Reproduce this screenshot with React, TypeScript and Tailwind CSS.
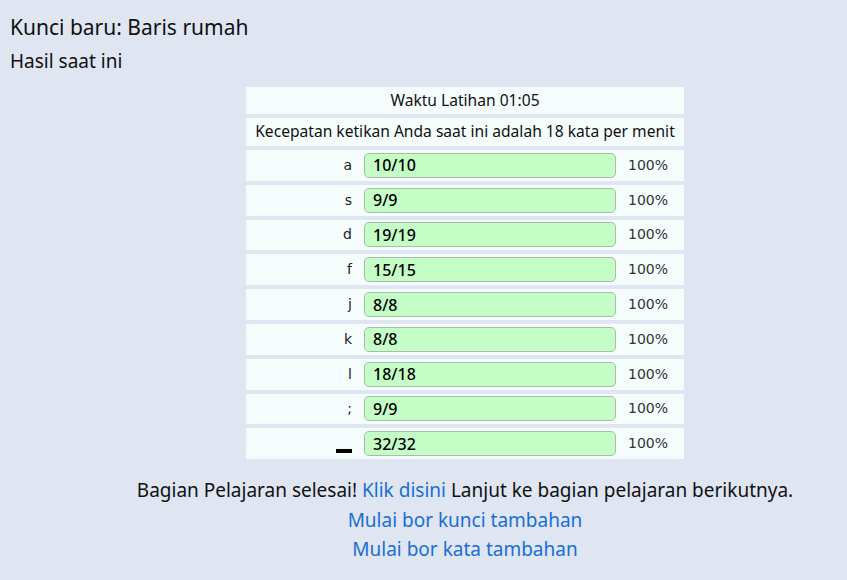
import React from 'react';

const font = { fontFamily: '"Noto Sans", "Open Sans", sans-serif' };

type KeyResult = { key: string; hits: number; total: number };

const results: KeyResult[] = [
  { key: 'a', hits: 10, total: 10 },
  { key: 's', hits: 9, total: 9 },
  { key: 'd', hits: 19, total: 19 },
  { key: 'f', hits: 15, total: 15 },
  { key: 'j', hits: 8, total: 8 },
  { key: 'k', hits: 8, total: 8 },
  { key: 'l', hits: 18, total: 18 },
  { key: ';', hits: 9, total: 9 },
  { key: 'space', hits: 32, total: 32 },
];

function KeyRow({ item }: { item: KeyResult }) {
  const pct = Math.round((item.hits / item.total) * 100);
  return (
    <div className="flex h-[30.8px] w-[438px] items-center bg-[#f4fcfc]">
      <div className="flex w-[106px] justify-end font-['DejaVu_Sans'] text-[14px] text-[#222]">
        {item.key === 'space' ? (
          <span className="mt-[14px] block h-[4px] w-[16px] bg-black" />
        ) : (
          <span>{item.key}</span>
        )}
      </div>
      <div className="ml-[12px] flex h-[25px] w-[252px] items-center rounded-[5px] border border-[#a9bca9] bg-[#c4fdc6] pl-[8px] text-[16px] font-medium text-black">
        {item.hits}/{item.total}
      </div>
      <div className="ml-[12px] font-['DejaVu_Sans'] text-[14px] text-[#333]">{pct}%</div>
    </div>
  );
}

export default function App() {
  return (
    <div className="min-h-[580px] w-full bg-[#dfe5f1] text-[#111]" style={font}>
      <div className="px-[10px] pt-[12px]">
        <h1 className="text-[21px] leading-[30px]">Kunci baru: Baris rumah</h1>
        <h2 className="mt-[6px] text-[19px] leading-[26px]">Hasil saat ini</h2>
      </div>

      <div className="ml-[83px] mt-[13px] flex flex-col items-center">
        <div className="flex flex-col gap-[4px]">
          <div className="flex h-[27px] w-[438px] items-center justify-center bg-[#f4fcfc] text-[15.6px]">
            Waktu Latihan 01:05
          </div>
          <div className="flex h-[28px] w-[438px] items-center justify-center bg-[#f4fcfc] text-[15.6px]">
            Kecepatan ketikan Anda saat ini adalah 18 kata per menit
          </div>
          {results.map((r) => (
            <KeyRow key={r.key} item={r} />
          ))}
        </div>

        <div className="mt-[17px] flex flex-col items-center text-[19px] leading-[29.5px]">
          <p>
            Bagian Pelajaran selesai!{' '}
            <a href="#" className="text-[#1a6ed4]">
              Klik disini
            </a>{' '}
            Lanjut ke bagian pelajaran berikutnya.
          </p>
          <a href="#" className="text-[#1a6ed4]">
            Mulai bor kunci tambahan
          </a>
          <a href="#" className="text-[#1a6ed4]">
            Mulai bor kata tambahan
          </a>
        </div>
      </div>
    </div>
  );
}
